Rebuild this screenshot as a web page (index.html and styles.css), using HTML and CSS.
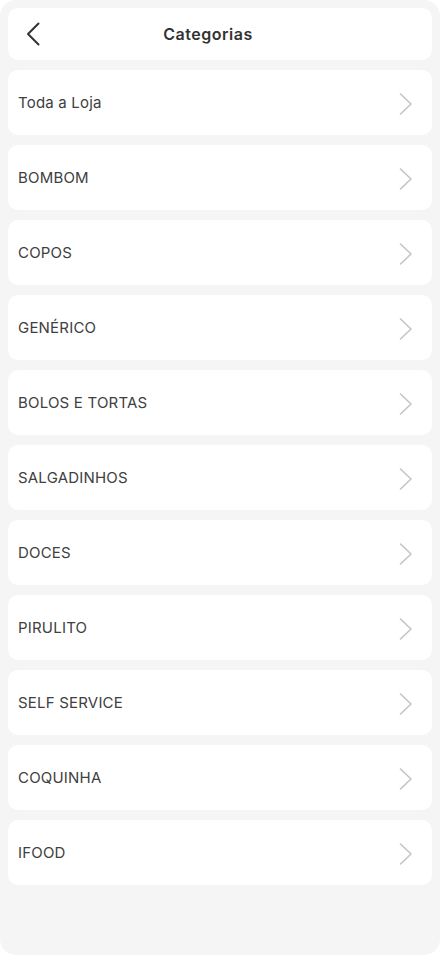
FILE: index.html
```html
<!DOCTYPE html>
<html lang="pt-BR">
<head>
<meta charset="utf-8">
<title>Categorias</title>
<link rel="stylesheet" href="styles.css">
</head>
<body>
<div class="screen">
  <header class="topbar">
    <button class="back" aria-label="Voltar">
      <svg width="14" height="24" viewBox="0 0 14 24"><path d="M12.5 1.5 L2 12 L12.5 22.5" fill="none" stroke="#333" stroke-width="2" stroke-linecap="round" stroke-linejoin="round"/></svg>
    </button>
    <h1 class="title">Categorias</h1>
  </header>
  <ul class="list">
    <li class="row"><span class="label">Toda a Loja</span><svg class="chev" width="14" height="22" viewBox="0 0 14 22"><path d="M1.5 1 L12 11 L1.5 21" fill="none" stroke="#c4c4c4" stroke-width="1.6" stroke-linecap="round" stroke-linejoin="round"/></svg></li>
    <li class="row"><span class="label">BOMBOM</span><svg class="chev" width="14" height="22" viewBox="0 0 14 22"><path d="M1.5 1 L12 11 L1.5 21" fill="none" stroke="#c4c4c4" stroke-width="1.6" stroke-linecap="round" stroke-linejoin="round"/></svg></li>
    <li class="row"><span class="label">COPOS</span><svg class="chev" width="14" height="22" viewBox="0 0 14 22"><path d="M1.5 1 L12 11 L1.5 21" fill="none" stroke="#c4c4c4" stroke-width="1.6" stroke-linecap="round" stroke-linejoin="round"/></svg></li>
    <li class="row"><span class="label">GENÉRICO</span><svg class="chev" width="14" height="22" viewBox="0 0 14 22"><path d="M1.5 1 L12 11 L1.5 21" fill="none" stroke="#c4c4c4" stroke-width="1.6" stroke-linecap="round" stroke-linejoin="round"/></svg></li>
    <li class="row"><span class="label">BOLOS E TORTAS</span><svg class="chev" width="14" height="22" viewBox="0 0 14 22"><path d="M1.5 1 L12 11 L1.5 21" fill="none" stroke="#c4c4c4" stroke-width="1.6" stroke-linecap="round" stroke-linejoin="round"/></svg></li>
    <li class="row"><span class="label">SALGADINHOS</span><svg class="chev" width="14" height="22" viewBox="0 0 14 22"><path d="M1.5 1 L12 11 L1.5 21" fill="none" stroke="#c4c4c4" stroke-width="1.6" stroke-linecap="round" stroke-linejoin="round"/></svg></li>
    <li class="row"><span class="label">DOCES</span><svg class="chev" width="14" height="22" viewBox="0 0 14 22"><path d="M1.5 1 L12 11 L1.5 21" fill="none" stroke="#c4c4c4" stroke-width="1.6" stroke-linecap="round" stroke-linejoin="round"/></svg></li>
    <li class="row"><span class="label">PIRULITO</span><svg class="chev" width="14" height="22" viewBox="0 0 14 22"><path d="M1.5 1 L12 11 L1.5 21" fill="none" stroke="#c4c4c4" stroke-width="1.6" stroke-linecap="round" stroke-linejoin="round"/></svg></li>
    <li class="row"><span class="label">SELF SERVICE</span><svg class="chev" width="14" height="22" viewBox="0 0 14 22"><path d="M1.5 1 L12 11 L1.5 21" fill="none" stroke="#c4c4c4" stroke-width="1.6" stroke-linecap="round" stroke-linejoin="round"/></svg></li>
    <li class="row"><span class="label">COQUINHA</span><svg class="chev" width="14" height="22" viewBox="0 0 14 22"><path d="M1.5 1 L12 11 L1.5 21" fill="none" stroke="#c4c4c4" stroke-width="1.6" stroke-linecap="round" stroke-linejoin="round"/></svg></li>
    <li class="row"><span class="label">IFOOD</span><svg class="chev" width="14" height="22" viewBox="0 0 14 22"><path d="M1.5 1 L12 11 L1.5 21" fill="none" stroke="#c4c4c4" stroke-width="1.6" stroke-linecap="round" stroke-linejoin="round"/></svg></li>
  </ul>
</div>
</body>
</html>
```
FILE: styles.css
```css
* { box-sizing: border-box; }
html, body { margin: 0; padding: 0; background: #ffffff; }
body { font-family: "Inter", "Open Sans", sans-serif; }
.screen {
  width: 440px;
  height: 955px;
  background: #f5f5f5;
  border-radius: 16px;
  padding: 8px;
  display: flex;
  flex-direction: column;
  gap: 10px;
}
.topbar {
  height: 52px;
  background: #fff;
  border-radius: 10px;
  display: flex;
  align-items: center;
  position: relative;
}
.back {
  border: 0;
  background: none;
  padding: 0;
  margin-left: 18px;
  width: 14px;
  height: 24px;
  display: flex;
  cursor: pointer;
}
.title {
  position: absolute;
  left: 0;
  right: 0;
  margin: 0;
  text-align: center;
  font-size: 16px;
  font-weight: 600;
  color: #333;
  letter-spacing: 0.5px;
  pointer-events: none;
  padding-right: 24px;
}
.list {
  list-style: none;
  margin: 0;
  padding: 0;
  display: flex;
  flex-direction: column;
  gap: 10px;
}
.row {
  height: 65px;
  background: #fff;
  border-radius: 10px;
  display: flex;
  align-items: center;
  justify-content: space-between;
  padding: 0 19px 0 10px;
}
.label {
  font-size: 15px;
  color: #404040;
  letter-spacing: 0.2px;
}
.chev { display: block; margin-top: 2px; }
```
